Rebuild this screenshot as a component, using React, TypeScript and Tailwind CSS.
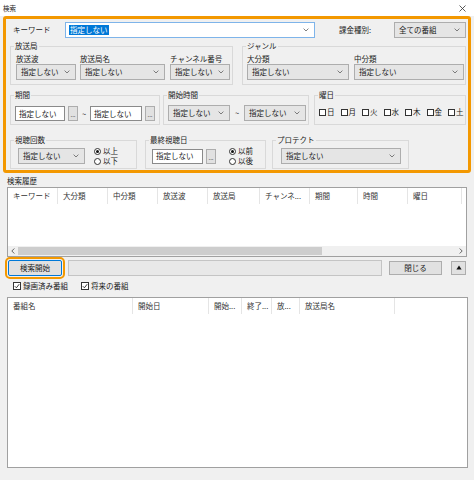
import React from "react";

function Chevron() {
  return (
    <svg width="6" height="4" viewBox="0 0 6 4" className="shrink-0">
      <path d="M0.6 0.6 L3 3 L5.4 0.6" fill="none" stroke="#5f5f5f" strokeWidth="0.8" />
    </svg>
  );
}

function Select({ w, value = "指定しない" }: { w: string; value?: string }) {
  return (
    <div className={`flex h-[16px] shrink-0 items-center justify-between border border-[#adadad] bg-[#e5e5e5] pl-[4px] pr-[5px] ${w}`}>
      <span className="whitespace-nowrap">{value}</span>
      <Chevron />
    </div>
  );
}

function TextBox({ w }: { w: string }) {
  return (
    <div className={`flex h-[15px] shrink-0 items-center border border-[#8a8a8a] bg-white pl-[3px] ${w}`}>
      <span className="whitespace-nowrap">指定しない</span>
    </div>
  );
}

function Dots() {
  return (
    <div className="flex h-[15px] w-[10px] shrink-0 items-end justify-center border border-[#adadad] bg-[#e1e1e1] pb-[2px] text-[6px] leading-[6px]">
      ...
    </div>
  );
}

function Group({ label, className, children }: { label: string; className: string; children: React.ReactNode }) {
  return (
    <fieldset className={`min-w-0 shrink-0 border border-[#d9d9d9] ${className}`}>
      <legend className="ml-[3px] px-[1px] leading-[10px]">{label}</legend>
      {children}
    </fieldset>
  );
}

function Radio({ label, on = false }: { label: string; on?: boolean }) {
  return (
    <div className="flex h-[10px] items-center gap-[2px]">
      <span className="flex h-[7px] w-[7px] items-center justify-center rounded-full border border-[#333] bg-white">
        {on && <span className="h-[3px] w-[3px] rounded-full bg-[#111]" />}
      </span>
      <span>{label}</span>
    </div>
  );
}

function Check({ label, on = false, small = false }: { label: string; on?: boolean; small?: boolean }) {
  return (
    <div className={`flex items-center ${small ? "gap-[1px]" : "gap-[2px]"}`}>
      <span className={`flex items-center justify-center border border-[#333] bg-white ${small ? "h-[7px] w-[7px]" : "h-[8px] w-[8px]"}`}>
        {on && (
          <svg width="6" height="6" viewBox="0 0 6 6">
            <path d="M0.8 3.2 L2.4 4.8 L5.2 1.2" fill="none" stroke="#222" strokeWidth="0.9" />
          </svg>
        )}
      </span>
      <span>{label}</span>
    </div>
  );
}

const histCols = [
  { t: "キーワード", w: "w-[50px]" },
  { t: "大分類", w: "w-[50px]" },
  { t: "中分類", w: "w-[50px]" },
  { t: "放送波", w: "w-[50px]" },
  { t: "放送局", w: "w-[52px]" },
  { t: "チャンネ...", w: "w-[50px]" },
  { t: "期間", w: "w-[48px]" },
  { t: "時間", w: "w-[50px]" },
  { t: "曜日", w: "w-[54px]" },
];

const progCols = [
  { t: "番組名", w: "w-[125px]" },
  { t: "開始日", w: "w-[76px]" },
  { t: "開始...", w: "w-[33px]" },
  { t: "終了...", w: "w-[30px]" },
  { t: "放...", w: "w-[28px]" },
  { t: "放送局名", w: "w-[95px]" },
];

const days = ["日", "月", "火", "水", "木", "金", "土"];

export default function App() {
  return (
    <div className="flex h-[480px] w-[474px] flex-col overflow-hidden bg-[#f0f0f0] font-['Noto_Sans_CJK_JP','Liberation_Sans',sans-serif] text-[7.5px] leading-[10px] text-[#1a1a1a]">
      {/* title bar */}
      <div className="flex h-[16px] shrink-0 items-center justify-between bg-white pl-[3px] pr-[8px]">
        <span className="text-[6.5px]">検索</span>
        <svg width="7" height="7" viewBox="0 0 7 7">
          <path d="M0.5 0.5 L6.5 6.5 M6.5 0.5 L0.5 6.5" stroke="#333" strokeWidth="0.8" />
        </svg>
      </div>

      {/* search conditions */}
      <div className="mx-[3px] h-[157px] shrink-0 rounded-[3px] border-[3px] border-[#f39800] pl-[4px] pr-[2px]">
        <div className="mt-[3px] flex h-[16px] items-center">
          <span className="w-[55px] pl-[3px]">キーワード</span>
          <div className="flex h-[16px] w-[250px] items-center justify-between border border-[#7eb4ea] bg-white pl-[3px] pr-[5px]">
            <span className="bg-[#0078d7] px-[1px] text-white">指定しない</span>
            <Chevron />
          </div>
          <span className="ml-[24px] w-[55px]">課金種別:</span>
          <Select w="w-[72px]" value="全ての番組" />
        </div>

        <div className="mt-[3px] flex gap-[9px]">
          <Group label="放送局" className="w-[223px]">
            <div className="flex pb-[4px] pl-[5px] pt-[3px]">
              <div className="flex flex-col">
                <span>放送波</span>
                <Select w="w-[60px]" />
              </div>
              <div className="ml-[4px] flex flex-col">
                <span>放送局名</span>
                <Select w="w-[85px]" />
              </div>
              <div className="ml-[5px] flex flex-col">
                <span>チャンネル番号</span>
                <Select w="w-[60px]" />
              </div>
            </div>
          </Group>
          <Group label="ジャンル" className="w-[224px]">
            <div className="flex pb-[4px] pl-[4px] pt-[3px]">
              <div className="flex flex-col">
                <span>大分類</span>
                <Select w="w-[102px]" />
              </div>
              <div className="ml-[5px] flex flex-col">
                <span>中分類</span>
                <Select w="w-[110px]" />
              </div>
            </div>
          </Group>
        </div>

        <div className="mt-[5px] flex">
          <Group label="期間" className="w-[150px]">
            <div className="flex items-center pb-[3px] pl-[4px] pt-[6px]">
              <TextBox w="w-[50px]" />
              <span className="ml-[3px]"><Dots /></span>
              <span className="w-[12px] text-center">~</span>
              <TextBox w="w-[52px]" />
              <span className="ml-[3px]"><Dots /></span>
            </div>
          </Group>
          <Group label="開始時間" className="ml-[3px] w-[146px]">
            <div className="flex items-center pb-[3px] pl-[4px] pt-[5px]">
              <Select w="w-[62px]" />
              <span className="w-[14px] text-center">~</span>
              <Select w="w-[62px]" />
            </div>
          </Group>
          <Group label="曜日" className="ml-[5px] w-[152px]">
            <div className="flex items-center gap-[6px] pl-[4px] pt-[7px]">
              {days.map((d) => (
                <Check key={d} label={d} small />
              ))}
            </div>
          </Group>
        </div>

        <div className="mt-[10px] flex">
          <Group label="視聴回数" className="w-[127px]">
            <div className="flex items-center pb-[2px] pl-[7px] pt-[1px]">
              <Select w="w-[67px]" />
              <div className="ml-[9px] flex flex-col">
                <Radio label="以上" on />
                <Radio label="以下" />
              </div>
            </div>
          </Group>
          <Group label="最終視聴日" className="ml-[8px] w-[121px]">
            <div className="flex items-center pb-[2px] pl-[6px] pt-[1px]">
              <TextBox w="w-[51px]" />
              <span className="ml-[3px]"><Dots /></span>
              <div className="ml-[13px] flex flex-col">
                <Radio label="以前" on />
                <Radio label="以後" />
              </div>
            </div>
          </Group>
          <Group label="プロテクト" className="ml-[6px] w-[137px]">
            <div className="flex h-[23px] items-center pb-[2px] pl-[8px] pt-[1px]">
              <Select w="w-[120px]" />
            </div>
          </Group>
        </div>
      </div>

      {/* history */}
      <div className="mt-[3px] px-[7px]">
        <div className="h-[10px]">検索履歴</div>
        <div className="mt-[1px] flex h-[70px] w-[460px] flex-col border border-[#a0a0a0] bg-white">
          <div className="flex h-[16px] shrink-0 text-[#333]">
            {histCols.map((c) => (
              <div key={c.t} className={`flex shrink-0 items-center border-r border-[#e5e5e5] pl-[5px] ${c.w}`}>
                <span className="whitespace-nowrap">{c.t}</span>
              </div>
            ))}
          </div>
          <div className="flex-1" />
          <div className="flex h-[10px] shrink-0 items-center bg-[#f0f0f0]">
            <div className="flex w-[10px] justify-center">
              <svg width="4" height="6" viewBox="0 0 4 6">
                <path d="M3.3 0.5 L0.8 3 L3.3 5.5" fill="none" stroke="#555" strokeWidth="0.9" />
              </svg>
            </div>
            <div className="h-[8px] w-[304px] bg-[#cdcdcd]" />
            <div className="flex-1" />
            <div className="flex w-[10px] justify-center">
              <svg width="4" height="6" viewBox="0 0 4 6">
                <path d="M0.7 0.5 L3.2 3 L0.7 5.5" fill="none" stroke="#555" strokeWidth="0.9" />
              </svg>
            </div>
          </div>
        </div>
      </div>

      {/* buttons */}
      <div className="mt-[2px] flex h-[17px] shrink-0 items-center pl-[8px]">
        <div className="flex h-[16px] w-[54px] items-center justify-center rounded-[2px] border border-[#0078d7] bg-[#e1e1e1] outline-2 outline-offset-[1px] outline-[#f39800] outline-solid">
          検索開始
        </div>
        <div className="ml-[6px] h-[16px] w-[314px] border border-[#c4c4c4] bg-[#e8e8e8]" />
        <div className="ml-[7px] flex h-[14px] w-[53px] items-center justify-center border border-[#adadad] bg-[#e1e1e1]">
          閉じる
        </div>
        <div className="ml-[9px] flex h-[14px] w-[15px] items-center justify-center border border-[#adadad] bg-[#e1e1e1]">
          <svg width="6" height="5" viewBox="0 0 6 5">
            <path d="M3 0.5 L5.6 4.5 L0.4 4.5 Z" fill="#111" />
          </svg>
        </div>
      </div>

      <div className="mt-[5px] flex h-[10px] shrink-0 items-center gap-[13px] pl-[13px]">
        <Check label="録画済み番組" on />
        <Check label="将来の番組" on />
      </div>

      {/* programs */}
      <div className="ml-[7px] mt-[6px] flex h-[171px] w-[461px] shrink-0 flex-col border border-[#a0a0a0] bg-white">
        <div className="flex h-[16px] shrink-0 text-[#333]">
          {progCols.map((c) => (
            <div key={c.t} className={`flex shrink-0 items-center border-r border-[#e5e5e5] pl-[5px] ${c.w}`}>
              <span className="whitespace-nowrap">{c.t}</span>
            </div>
          ))}
        </div>
      </div>
    </div>
  );
}
